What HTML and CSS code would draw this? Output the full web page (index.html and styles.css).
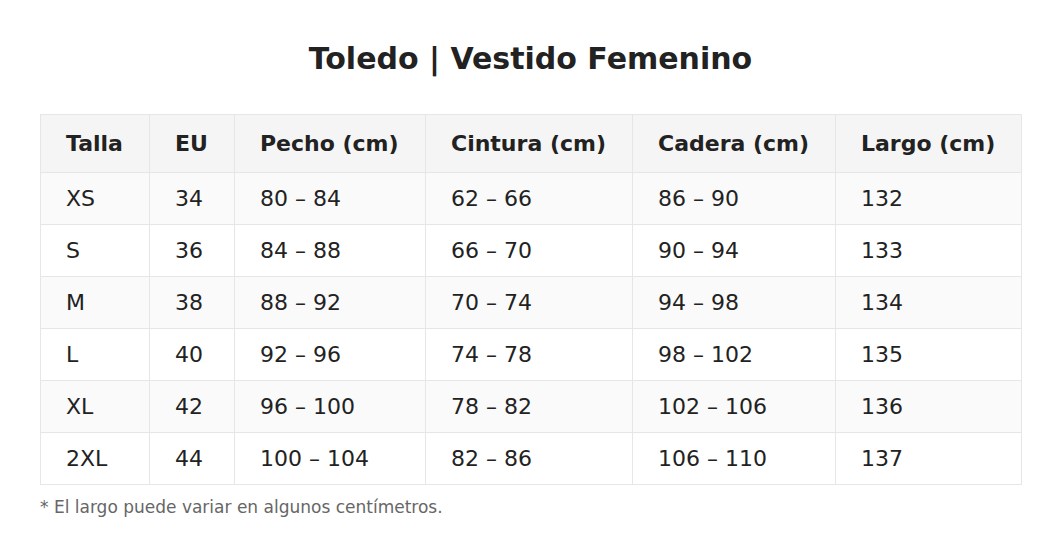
FILE: index.html
```html
<!DOCTYPE html>
<html lang="es">
<head>
<meta charset="utf-8">
<title>Toledo | Vestido Femenino</title>
<link rel="stylesheet" href="styles.css">
</head>
<body>
<main class="page">
  <h1 class="title">Toledo | Vestido Femenino</h1>
  <table class="sizes">
    <colgroup>
      <col class="c1"><col class="c2"><col class="c3"><col class="c4"><col class="c5"><col class="c6">
    </colgroup>
    <thead>
      <tr><th>Talla</th><th>EU</th><th>Pecho (cm)</th><th>Cintura (cm)</th><th>Cadera (cm)</th><th>Largo (cm)</th></tr>
    </thead>
    <tbody>
      <tr><td>XS</td><td>34</td><td>80 – 84</td><td>62 – 66</td><td>86 – 90</td><td>132</td></tr>
      <tr><td>S</td><td>36</td><td>84 – 88</td><td>66 – 70</td><td>90 – 94</td><td>133</td></tr>
      <tr><td>M</td><td>38</td><td>88 – 92</td><td>70 – 74</td><td>94 – 98</td><td>134</td></tr>
      <tr><td>L</td><td>40</td><td>92 – 96</td><td>74 – 78</td><td>98 – 102</td><td>135</td></tr>
      <tr><td>XL</td><td>42</td><td>96 – 100</td><td>78 – 82</td><td>102 – 106</td><td>136</td></tr>
      <tr><td>2XL</td><td>44</td><td>100 – 104</td><td>82 – 86</td><td>106 – 110</td><td>137</td></tr>
    </tbody>
  </table>
  <p class="note">* El largo puede variar en algunos centímetros.</p>
</main>
</body>
</html>
```
FILE: styles.css
```css
html, body {
  margin: 0;
  padding: 0;
  background: #ffffff;
}
body {
  font-family: "DejaVu Sans", sans-serif;
  color: #222222;
}
.page {
  padding: 40px 40px 0 40px;
}
.title {
  margin: 1px 0 37px 0;
  text-align: center;
  font-size: 30px;
  line-height: 36px;
  font-weight: bold;
  color: #222222;
}
.sizes {
  width: 981px;
  border-collapse: collapse;
  table-layout: fixed;
  font-size: 22px;
}
.c1 { width: 109px; }
.c2 { width: 85px; }
.c3 { width: 191px; }
.c4 { width: 207px; }
.c5 { width: 203px; }
.c6 { width: 186px; }
.sizes th, .sizes td {
  border: 1px solid #e6e6e6;
  text-align: left;
  padding: 0 0 0 25px;
  white-space: nowrap;
}
.sizes th {
  height: 57px;
  background: #f5f5f5;
  font-weight: bold;
}
.sizes td {
  height: 51px;
}
.sizes tbody tr:nth-child(odd) td {
  background: #fafafa;
}
.note {
  margin: 11px 0 0 0;
  font-size: 17px;
  line-height: 22px;
  color: #666666;
}
```
